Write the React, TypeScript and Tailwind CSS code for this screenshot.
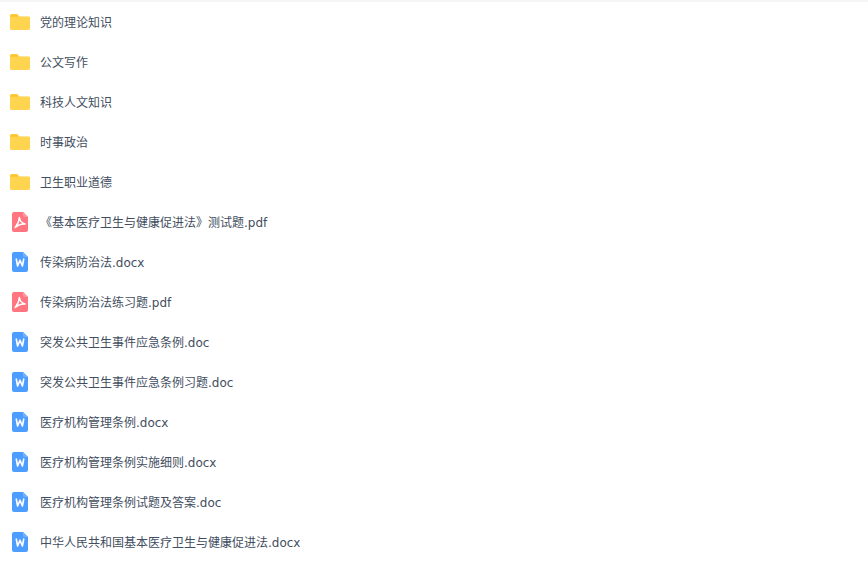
import React from 'react';

type Kind = 'folder' | 'pdf' | 'word';

const items: { name: string; kind: Kind }[] = [
    { name: '党的理论知识', kind: 'folder' },
    { name: '公文写作', kind: 'folder' },
    { name: '科技人文知识', kind: 'folder' },
    { name: '时事政治', kind: 'folder' },
    { name: '卫生职业道德', kind: 'folder' },
    { name: '《基本医疗卫生与健康促进法》测试题.pdf', kind: 'pdf' },
    { name: '传染病防治法.docx', kind: 'word' },
    { name: '传染病防治法练习题.pdf', kind: 'pdf' },
    { name: '突发公共卫生事件应急条例.doc', kind: 'word' },
    { name: '突发公共卫生事件应急条例习题.doc', kind: 'word' },
    { name: '医疗机构管理条例.docx', kind: 'word' },
    { name: '医疗机构管理条例实施细则.docx', kind: 'word' },
    { name: '医疗机构管理条例试题及答案.doc', kind: 'word' },
    { name: '中华人民共和国基本医疗卫生与健康促进法.docx', kind: 'word' },
];

const FolderIcon = () => (
    <svg width="20" height="16" viewBox="0 0 20 16" className="ml-[10px] shrink-0">
        <path d="M1.5 0H7.2L9.4 2.4H18.5A1.5 1.5 0 0 1 20 3.9V8H0V1.5A1.5 1.5 0 0 1 1.5 0Z" fill="#FFC933" />
        <path d="M0 3H18.5A1.5 1.5 0 0 1 20 4.5V14.5A1.5 1.5 0 0 1 18.5 16H1.5A1.5 1.5 0 0 1 0 14.5Z" fill="#FFD54F" />
    </svg>
);

const PdfIcon = () => (
    <svg width="16" height="20" viewBox="0 0 16 20" className="ml-[12px] shrink-0">
        <path d="M2 0H11L16 5V18A2 2 0 0 1 14 20H2A2 2 0 0 1 0 18V2A2 2 0 0 1 2 0Z" fill="#FF7580" />
        <path d="M11 0L16 5H12.5A1.5 1.5 0 0 1 11 3.5Z" fill="#FF959D" />
        <path d="M7.4 5.5C7.8 8.5 9.5 11 13 12C10 11.8 6.5 12.5 3.2 15.5C5.5 12.5 7.2 9 7.4 5.5Z" fill="none" stroke="#fff" strokeWidth="1.5" strokeLinejoin="round" />
    </svg>
);

const WordIcon = () => (
    <svg width="16" height="20" viewBox="0 0 16 20" className="ml-[12px] shrink-0">
        <path d="M2 0H11L16 5V18A2 2 0 0 1 14 20H2A2 2 0 0 1 0 18V2A2 2 0 0 1 2 0Z" fill="#4D9CFF" />
        <path d="M11 0L16 5H12.5A1.5 1.5 0 0 1 11 3.5Z" fill="#74B1FF" />
        <path d="M4.2 6.5L5.6 14L8 8.2L10.4 14L11.8 6.5" fill="none" stroke="#fff" strokeWidth="1.6" strokeLinejoin="round" />
    </svg>
);

export default function App() {
    return (
        <div className="w-[868px] h-[563px] overflow-hidden bg-white border-t-2 border-[#f5f5f5] font-['DejaVu_Sans','Noto_Sans_CJK_SC',sans-serif]">
            {items.map(item => (
                <div key={item.name} className="flex items-center h-10 text-xs text-[#424e60]">
                    {item.kind === 'folder' && <FolderIcon />}
                    {item.kind === 'pdf' && <PdfIcon />}
                    {item.kind === 'word' && <WordIcon />}
                    <span className={item.kind === 'folder' ? 'ml-[10px] pt-[2px]' : 'ml-[12px] pt-[2px]'}>{item.name}</span>
                </div>
            ))}
        </div>
    );
}
